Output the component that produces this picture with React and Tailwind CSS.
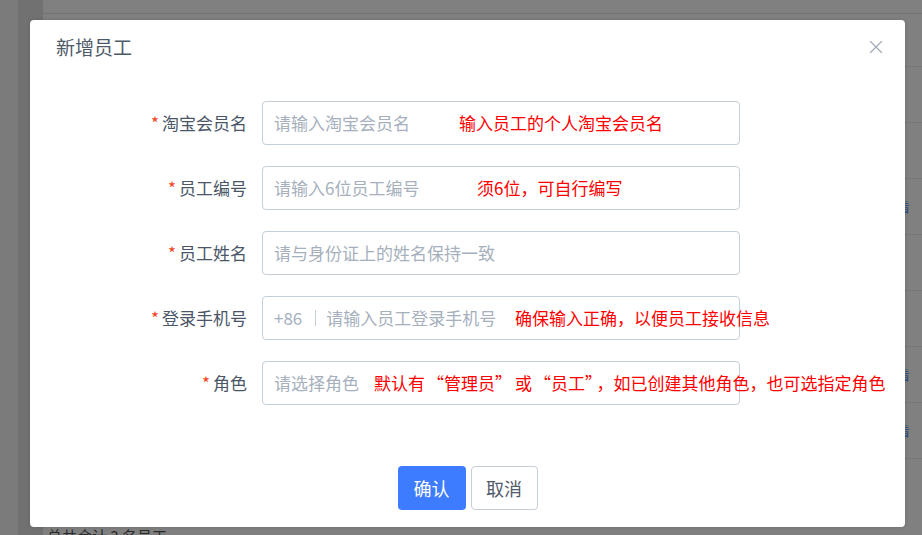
import { X } from "lucide-react";

const rows = [
  { label: "淘宝会员名", placeholder: "请输入淘宝会员名", note: "输入员工的个人淘宝会员名", noteLeft: "left-[196px]" },
  { label: "员工编号", placeholder: "请输入6位员工编号", note: "须6位，可自行编写", noteLeft: "left-[214px]" },
  { label: "员工姓名", placeholder: "请与身份证上的姓名保持一致" },
  { label: "登录手机号", placeholder: "请输入员工登录手机号", prefix: "+86", note: "确保输入正确，以便员工接收信息", noteLeft: "left-[252px]" },
  { label: "角色", placeholder: "请选择角色", note: "默认有“管理员”或“员工”，如已创建其他角色，也可选指定角色", noteLeft: "left-[111px]" },
];

const tableRows = [0, 1, 2, 3, 4, 5, 6, 7];

// curly quotes come out narrower than in the screenshot, pad them a bit
const renderNote = (text) =>
  text.split(/([“”])/).map((part, i) =>
    part === "“" ? (
      <span key={i} className="ml-[2px]">{part}</span>
    ) : part === "”" ? (
      <span key={i} className="mr-[3px]">{part}</span>
    ) : (
      part
    )
  );

const App = () => {
  return (
    <div className="relative h-[535px] w-[922px] overflow-hidden bg-[#808080] font-['Noto_Sans_CJK_SC','Noto_Sans',sans-serif]">
      {/* page behind the mask */}
      <div className="flex h-full">
        <div className="w-[18px] bg-[#7b7b7b]" />
        <div className="w-[25px] bg-[#717171]" />
        <div className="flex flex-1 flex-col">
          <div className="h-[14px] shrink-0 border-b border-[#737373]" />
          <div className="h-[52px] shrink-0" />
          {tableRows.map((r) => (
            <div key={r} className="flex h-[56px] shrink-0 items-center justify-end border-t border-[#767676] pr-[12px]">
              {(r === 2 || r === 5 || r === 6) && <span className="text-[13px] text-[#2a4a7a]">查看</span>}
            </div>
          ))}
          <div className="mt-[12px] shrink-0 pl-[4px] text-[15px] leading-[20px] text-[#2b2b2b]">总共合计 3 名员工</div>
        </div>
      </div>

      {/* modal */}
      <div className="absolute left-[30px] top-[20px] flex h-[507px] w-[875px] flex-col rounded-[4px] bg-white shadow-[0_0_4px_rgba(0,0,0,0.15)]">
        <div className="flex items-center justify-between pl-[26px] pr-[18px] pt-[15px]">
          <h2 className="text-[19px] leading-[24px] text-[#4d5a6a]">新增员工</h2>
          <X className="h-[22px] w-[22px] text-[#a3adba]" strokeWidth={1.3} />
        </div>

        <div className="mt-[42px] flex flex-col gap-[21px]">
          {rows.map((row) => (
            <div key={row.label} className="flex items-center">
              <label className="w-[217px] text-right text-[17px] text-[#4a5668]">
                <span className="mr-[3px] text-[#f0451a]">*</span>
                {row.label}
              </label>
              <div className="relative ml-[15px] flex h-[44px] w-[478px] items-center rounded-[4px] border border-[#c5ced9] px-[11px] text-[17px]">
                {row.prefix && (
                  <>
                    <span className="text-[#a6b0bd]">{row.prefix}</span>
                    <span className="ml-[13px] mr-[10px] h-[16px] w-px bg-[#c5ced9]" />
                  </>
                )}
                <span className="whitespace-nowrap text-[#a6b0bd]">{row.placeholder}</span>
                {row.note && (
                  <span className={`absolute top-1/2 -translate-y-1/2 whitespace-nowrap text-[17px] text-[#ff0000] ${row.noteLeft}`}>
                    {renderNote(row.note)}
                  </span>
                )}
              </div>
            </div>
          ))}
        </div>

        <div className="mt-auto mb-[17px] flex justify-center gap-[5px]">
          <button className="h-[44px] w-[68px] rounded-[4px] bg-[#3d7bff] text-[18px] text-white">确认</button>
          <button className="h-[44px] w-[67px] rounded-[4px] border border-[#c5ced9] bg-white text-[18px] text-[#4f5b6b]">取消</button>
        </div>
      </div>
    </div>
  );
};

export default App;
